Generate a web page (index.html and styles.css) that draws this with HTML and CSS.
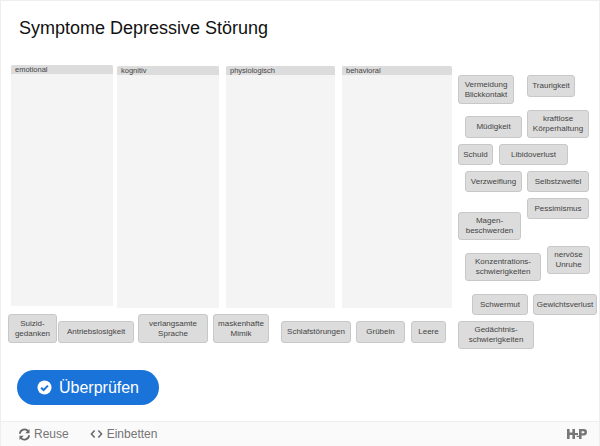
FILE: index.html
```html
<!DOCTYPE html>
<html lang="de">
<head>
    <meta charset="UTF-8">
    <meta name="viewport" content="width=device-width, initial-scale=1.0">
    <title>Symptome Depressive Störung</title>
    <link rel="stylesheet" href="styles.css">
</head>
<body>
    <div class="content">
        <div class="main">
            <h1 class="title">Symptome Depressive Störung</h1>

            <div class="board">
                <!-- Drop zones -->
                <div class="zone zone-emotional"><div class="zone-label">emotional</div></div>
                <div class="zone zone-kognitiv"><div class="zone-label">kognitiv</div></div>
                <div class="zone zone-physio"><div class="zone-label">physiologisch</div></div>
                <div class="zone zone-behavioral"><div class="zone-label">behavioral</div></div>

                <!-- Draggable cards -->
                <div class="card card-vermeidung">Vermeidung<br>Blickkontakt</div>
                <div class="card card-traurigkeit">Traurigkeit</div>
                <div class="card card-muedigkeit">Müdigkeit</div>
                <div class="card card-kraftlos">kraftlose<br>Körperhaltung</div>
                <div class="card card-schuld">Schuld</div>
                <div class="card card-libido">Libidoverlust</div>
                <div class="card card-verzweiflung">Verzweiflung</div>
                <div class="card card-selbstzweifel">Selbstzweifel</div>
                <div class="card card-pessimismus">Pessimismus</div>
                <div class="card card-magen">Magen-<br>beschwerden</div>
                <div class="card card-konzentration">Konzentrations-<br>schwierigkeiten</div>
                <div class="card card-nervoes">nervöse<br>Unruhe</div>
                <div class="card card-schwermut">Schwermut</div>
                <div class="card card-gewicht">Gewichtsverlust</div>
                <div class="card card-gedaechtnis">Gedächtnis-<br>schwierigkeiten</div>
                <div class="card card-suizid">Suizid-<br>gedanken</div>
                <div class="card card-antrieb">Antriebslosigkeit</div>
                <div class="card card-sprache">verlangsamte<br>Sprache</div>
                <div class="card card-mimik">maskenhafte<br>Mimik</div>
                <div class="card card-schlaf">Schlafstörungen</div>
                <div class="card card-grueblen">Grübeln</div>
                <div class="card card-leere">Leere</div>
            </div>

            <button class="check-btn">
                <svg class="check-icon" viewBox="0 0 16 16" width="15" height="15">
                    <circle cx="8" cy="8" r="7.5" fill="#fff"/>
                    <path d="M4.4 8.2 L7 10.8 L11.7 6" fill="none" stroke="#1a73d9" stroke-width="2.2"/>
                </svg>
                Überprüfen
            </button>
        </div>

        <div class="footer">
            <div class="footer-links">
                <span class="footer-link">
                    <svg viewBox="0 0 14 14" width="13" height="13">
                        <path d="M2 6.2 A5 5 0 0 1 11 3.6" fill="none" stroke="#666" stroke-width="1.9"/>
                        <path d="M12.4 1 V5.6 H7.8 Z" fill="#666"/>
                        <path d="M12 7.8 A5 5 0 0 1 3 10.4" fill="none" stroke="#666" stroke-width="1.9"/>
                        <path d="M1.6 13 V8.4 H6.2 Z" fill="#666"/>
                    </svg>
                    Reuse
                </span>
                <span class="footer-link">
                    <svg class="code-icon" viewBox="0 0 14 10" width="13" height="10">
                        <path d="M5 1.2 L1.5 5 L5 8.8 M9 1.2 L12.5 5 L9 8.8" fill="none" stroke="#666" stroke-width="1.6"/>
                    </svg>
                    Einbetten
                </span>
            </div>
            <svg class="logo" viewBox="0 0 20 10" width="20" height="10">
                <path d="M0 0 H2.6 V3.6 H5.4 V0 H8 V10 H5.4 V6 H2.6 V10 H0 Z" fill="#777"/>
                <rect x="8" y="4" width="3" height="2" fill="#777"/>
                <path d="M12 0 H17 Q20 0 20 3 Q20 6.4 17 6.4 H14.6 V10 H12 V8 H9.6 V6.8 H12 Z M14.6 2.2 V4.2 H16.4 Q17.4 4.2 17.4 3.2 Q17.4 2.2 16.4 2.2 Z" fill="#777" fill-rule="evenodd"/>
            </svg>
        </div>
    </div>
</body>
</html>
```

FILE: styles.css
```css
* {
    box-sizing: border-box;
}

html, body {
    margin: 0;
    height: 100%;
}

body {
    font-family: "Liberation Sans", Arial, sans-serif;
    background-color: #fff;
    overflow: hidden;
}

.content {
    height: 446px;
    display: flex;
    flex-direction: column;
    border: 1px solid #eee;
    border-bottom: none;
}

.main {
    flex: 1;
    padding: 0 16px;
}

.title {
    margin: 0;
    padding: 16px 2px 0;
    height: 59px;
    font-size: 18px;
    line-height: 23px;
    font-weight: normal;
    color: #111;
}

/* Free canvas: zones and cards are placed by hand, like the H5P task */
.board {
    position: relative;
    height: 310px;
    margin: 0 -16px 0;
}

.zone {
    position: absolute;
    background-color: #f4f4f4;
}

.zone-label {
    height: 9px;
    padding-left: 4px;
    background-color: #dcdcdc;
    border-radius: 2px 2px 0 0;
    font-size: 7.5px;
    line-height: 9px;
    color: #444;
}

.zone-emotional { left: 10px; top: 5px; width: 102px; height: 241px; }
.zone-kognitiv { left: 116px; top: 6px; width: 102px; height: 242px; }
.zone-physio { left: 225px; top: 6px; width: 109px; height: 242px; }
.zone-behavioral { left: 341px; top: 6px; width: 110px; height: 242px; }

.card {
    position: absolute;
    display: flex;
    align-items: center;
    justify-content: center;
    text-align: center;
    background-color: #dcdcdc;
    border: 1px solid #c8c8c8;
    border-radius: 3px;
    font-size: 8px;
    line-height: 10px;
    color: #444;
}

.card-vermeidung { left: 457px; top: 15px; width: 56px; height: 29px; }
.card-traurigkeit { left: 526px; top: 15px; width: 48px; height: 22px; }
.card-muedigkeit { left: 464px; top: 56px; width: 57px; height: 22px; }
.card-kraftlos { left: 526px; top: 50px; width: 62px; height: 28px; }
.card-schuld { left: 457px; top: 84px; width: 35px; height: 21px; }
.card-libido { left: 498px; top: 84px; width: 69px; height: 21px; }
.card-verzweiflung { left: 464px; top: 111px; width: 57px; height: 21px; }
.card-selbstzweifel { left: 526px; top: 111px; width: 62px; height: 21px; }
.card-pessimismus { left: 526px; top: 138px; width: 62px; height: 21px; }
.card-magen { left: 457px; top: 152px; width: 63px; height: 28px; }
.card-konzentration { left: 464px; top: 193px; width: 76px; height: 28px; }
.card-nervoes { left: 546px; top: 186px; width: 43px; height: 28px; }
.card-schwermut { left: 471px; top: 234px; width: 56px; height: 21px; }
.card-gewicht { left: 532px; top: 234px; width: 64px; height: 21px; }
.card-gedaechtnis { left: 457px; top: 261px; width: 76px; height: 28px; }
.card-suizid { left: 7px; top: 254px; width: 49px; height: 29px; }
.card-antrieb { left: 57px; top: 261px; width: 76px; height: 22px; }
.card-sprache { left: 137px; top: 254px; width: 70px; height: 29px; }
.card-mimik { left: 212px; top: 254px; width: 56px; height: 29px; }
.card-schlaf { left: 280px; top: 261px; width: 70px; height: 22px; }
.card-grueblen { left: 355px; top: 261px; width: 49px; height: 22px; }
.card-leere { left: 410px; top: 261px; width: 35px; height: 22px; }

.check-btn {
    display: flex;
    align-items: center;
    justify-content: center;
    gap: 7px;
    width: 142px;
    height: 35px;
    padding: 0;
    border: none;
    border-radius: 18px;
    background-color: #1a73d9;
    color: #fff;
    font-family: inherit;
    font-size: 16px;
    cursor: pointer;
}

.footer {
    height: 25px;
    display: flex;
    justify-content: space-between;
    align-items: center;
    padding: 0 12px 0 17px;
    background-color: #fafafa;
    border-top: 1px solid #eee;
    font-size: 12px;
    color: #757575;
}

.footer-links {
    display: flex;
    gap: 21px;
}

.footer-link {
    display: flex;
    align-items: center;
    gap: 3px;
}

.code-icon {
    margin-right: 1px;
}
```
